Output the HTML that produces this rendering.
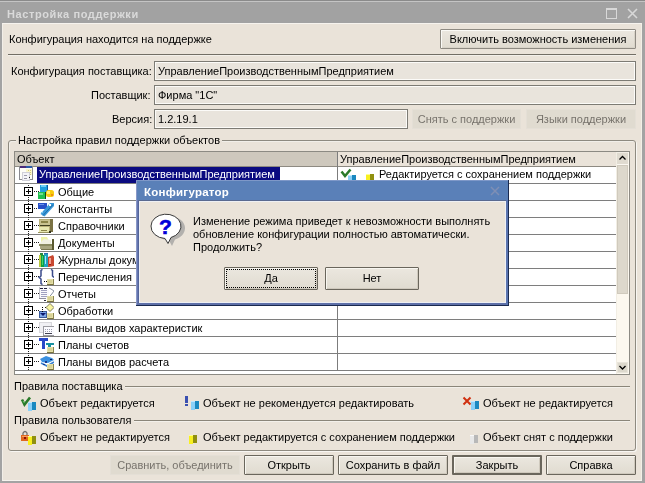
<!DOCTYPE html>
<html><head><meta charset="utf-8">
<style>
*{box-sizing:border-box}
html,body{margin:0;padding:0;width:645px;height:483px;overflow:hidden;background:#a4a4a4}
.a{position:absolute}
.t{position:absolute;font-family:"Liberation Sans",sans-serif;font-size:11px;line-height:13px;white-space:nowrap;color:#000;transform:translateZ(0)}
#win{position:absolute;left:0;top:0;width:645px;height:483px;background:#a3a3a3}
#title{position:absolute;left:0;top:0;width:645px;height:23px;background:#a2a2a2;border-top:1px solid #8a8a8a}
#content{position:absolute;left:2px;top:23px;width:640px;height:458px;background:#eae3d9;border-left:1px solid #f2eee8;border-top:1px solid #f6f3ee;border-bottom:1px solid #f6f3ee;border-right:1px solid #f2efe6}
.inp{position:absolute;border:1px solid #7d7b74;background:#e9e4dc;box-shadow:inset 0 0 0 1px #fcfbf8}
.btn{position:absolute;border:1px solid #6a665c;border-radius:1px;background:linear-gradient(#ebe7df,#e0dbd0);box-shadow:inset 1px 1px 0 #f8f6f0,inset -1px -1px 0 #cfc9bd}
.dbtn{position:absolute;background:#e0dbd0;border:1px solid #e4dfd6}
.bt{position:absolute;left:0;right:0;text-align:center;font-family:"Liberation Sans",sans-serif;font-size:11px;line-height:13px;white-space:nowrap;transform:translateZ(0)}
.sepd{position:absolute;height:1px;background:#8a8579}
.sepl{position:absolute;height:1px;background:#f3f0ea}
.row{position:absolute;left:15px;width:600px;height:1px;background:#8f8f8f}
</style></head><body>
<div id="win">
 <div id="title"></div>
 <div class="a" style="left:0;top:1px;width:645px;height:1px;background:#c4c4c4"></div>
 <div class="t" style="left:7px;top:8px;font-weight:bold;font-size:11px;color:#dadada;letter-spacing:0.6px">Настройка поддержки</div>
 <!-- max button -->
 <div class="a" style="left:606px;top:8px;width:11px;height:11px;border:1px solid #d8d8d8;border-top-width:2px"></div>
 <svg class="a" style="left:627px;top:8px" width="11" height="11"><path d="M1 1 L10 10 M10 1 L1 10" stroke="#d8d8d8" stroke-width="1.6"/></svg>
 <div id="content"></div>

 <div class="t" style="left:9px;top:33px">Конфигурация находится на поддержке</div>
 <div class="btn" style="left:440px;top:29px;width:196px;height:20px;border-color:#8e8a82;box-shadow:inset 1px 1px 0 #fbfaf6,inset -1px -1px 0 #d8d3c8"><div class="bt" style="top:3px">Включить возможность изменения</div></div>
 <div class="sepd" style="left:8px;top:54px;width:628px;background:#726e65"></div>
 <div class="sepl" style="left:8px;top:55px;width:628px"></div>

 <div class="t" style="left:11px;top:65px">Конфигурация поставщика:</div>
 <div class="inp" style="left:154px;top:61px;width:482px;height:20px"></div>
 <div class="t" style="left:158px;top:65px">УправлениеПроизводственнымПредприятием</div>
 <div class="t" style="left:91px;top:89px">Поставщик:</div>
 <div class="inp" style="left:154px;top:85px;width:482px;height:20px"></div>
 <div class="t" style="left:158px;top:89px">Фирма "1С"</div>
 <div class="t" style="left:112px;top:113px">Версия:</div>
 <div class="inp" style="left:154px;top:109px;width:254px;height:20px"></div>
 <div class="t" style="left:158px;top:113px">1.2.19.1</div>
 <div class="dbtn" style="left:412px;top:109px;width:109px;height:20px"><div class="bt" style="top:3px;color:#77736c">Снять с поддержки</div></div>
 <div class="dbtn" style="left:526px;top:109px;width:110px;height:20px"><div class="bt" style="top:3px;color:#77736c">Языки поддержки</div></div>

 <!-- group box -->
 <div class="a" style="left:8px;top:140px;width:628px;height:311px;border:1px solid #8e8a80;border-radius:3px;box-shadow:1px 1px 0 #f8f6f2, inset 1px 1px 0 #f2efe9"></div>
 <div class="a" style="left:16px;top:134px;width:206px;height:13px;background:#eae3d9"></div>
 <div class="t" style="left:18px;top:134px">Настройка правил поддержки объектов</div>

 <!-- grid -->
 <div class="a" style="left:14px;top:151px;width:616px;height:224px;border:1px solid #8c8a83;background:#fff"></div>
 <div class="a" style="left:15px;top:152px;width:322px;height:14px;background:#cec8bd"></div>
 <div class="a" style="left:338px;top:152px;width:278px;height:14px;background:#eae3d9"></div>
 <div class="a" style="left:15px;top:166px;width:601px;height:1px;background:#8e8a82"></div>
 <div class="a" style="left:337px;top:152px;width:1px;height:219px;background:#7c7c7c"></div>
 <div class="t" style="left:17px;top:153px">Объект</div>
 <div class="t" style="left:340px;top:153px">УправлениеПроизводственнымПредприятием</div>
 <div class="a" style="left:15px;top:183px;width:601px;height:1px;background:#7e7e7e"></div>
<div class="a" style="left:15px;top:200px;width:601px;height:1px;background:#7e7e7e"></div>
<div class="a" style="left:15px;top:217px;width:601px;height:1px;background:#7e7e7e"></div>
<div class="a" style="left:15px;top:234px;width:601px;height:1px;background:#7e7e7e"></div>
<div class="a" style="left:15px;top:251px;width:601px;height:1px;background:#7e7e7e"></div>
<div class="a" style="left:15px;top:268px;width:601px;height:1px;background:#7e7e7e"></div>
<div class="a" style="left:15px;top:285px;width:601px;height:1px;background:#7e7e7e"></div>
<div class="a" style="left:15px;top:302px;width:601px;height:1px;background:#7e7e7e"></div>
<div class="a" style="left:15px;top:319px;width:601px;height:1px;background:#7e7e7e"></div>
<div class="a" style="left:15px;top:336px;width:601px;height:1px;background:#7e7e7e"></div>
<div class="a" style="left:15px;top:353px;width:601px;height:1px;background:#7e7e7e"></div>
<div class="a" style="left:15px;top:370px;width:601px;height:1px;background:#7e7e7e"></div>
<div class="a" style="left:37px;top:167px;width:243px;height:16px;background:#0a0a80"></div>
<div class="t" style="left:39px;top:168px;color:#fff">УправлениеПроизводственнымПредприятием</div>
<svg class="a" style="left:18px;top:165px" width="16" height="17" viewBox="0 0 16 17" shape-rendering="crispEdges"><rect x="1" y="1" width="14" height="14" fill="#8a8a90"/><rect x="2" y="3" width="12" height="11" fill="#fdfdf8"/><rect x="2" y="1" width="6" height="2" fill="#4a2a7a"/><rect x="8" y="1" width="6" height="2" fill="#2a5aa8"/><rect x="10" y="5" width="1" height="1" fill="#b0a050"/><rect x="12" y="5" width="1" height="1" fill="#b0a050"/><rect x="12" y="7" width="1" height="1" fill="#b0a050"/><rect x="10" y="7" width="1" height="1" fill="#c0b060"/><rect x="12" y="9" width="1" height="1" fill="#a09050"/><rect x="8" y="4" width="6" height="6" fill="#f8f0a0" opacity="0.5"/><rect x="4" y="7" width="8" height="9" fill="#d0d0d8"/><rect x="5" y="8" width="6" height="7" fill="#f4f4f8"/><rect x="6" y="10" width="3" height="1" fill="#9898a8"/><rect x="6" y="13" width="3" height="1" fill="#9898a8"/><rect x="11" y="12" width="1" height="1" fill="#202020"/><rect x="1" y="14" width="3" height="1" fill="#8a8a90"/></svg>
<svg class="a" style="left:340px;top:168px" width="24" height="12" viewBox="0 0 24 12" shape-rendering="crispEdges"><path d="M1.5 3.5 L5 8 L10.5 1.5" fill="none" stroke="#2a7a2a" stroke-width="2.5" shape-rendering="auto"/><rect x="8" y="8" width="4" height="8" fill="#8ad0f8"/><rect x="12" y="7" width="4" height="8" fill="#1a88c0"/><rect x="8" y="7" width="4" height="1" fill="#c0e8ff"/></svg>
<svg class="a" style="left:365px;top:172px" width="10" height="8" viewBox="0 0 10 8" shape-rendering="crispEdges"><rect x="1" y="3" width="4" height="8" fill="#f8f020"/><rect x="5" y="2" width="4" height="8" fill="#909010"/><rect x="1" y="2" width="4" height="1" fill="#ffff90"/></svg>
<div class="t" style="left:379px;top:168px">Редактируется с сохранением поддержки</div>
<svg class="a" style="left:28px;top:185px" width="1" height="186" viewBox="0 0 1 186" shape-rendering="crispEdges"><rect x="0" y="0" width="1" height="1" fill="#202020"/><rect x="0" y="2" width="1" height="1" fill="#202020"/><rect x="0" y="4" width="1" height="1" fill="#202020"/><rect x="0" y="6" width="1" height="1" fill="#202020"/><rect x="0" y="8" width="1" height="1" fill="#202020"/><rect x="0" y="10" width="1" height="1" fill="#202020"/><rect x="0" y="12" width="1" height="1" fill="#202020"/><rect x="0" y="14" width="1" height="1" fill="#202020"/><rect x="0" y="16" width="1" height="1" fill="#202020"/><rect x="0" y="18" width="1" height="1" fill="#202020"/><rect x="0" y="20" width="1" height="1" fill="#202020"/><rect x="0" y="22" width="1" height="1" fill="#202020"/><rect x="0" y="24" width="1" height="1" fill="#202020"/><rect x="0" y="26" width="1" height="1" fill="#202020"/><rect x="0" y="28" width="1" height="1" fill="#202020"/><rect x="0" y="30" width="1" height="1" fill="#202020"/><rect x="0" y="32" width="1" height="1" fill="#202020"/><rect x="0" y="34" width="1" height="1" fill="#202020"/><rect x="0" y="36" width="1" height="1" fill="#202020"/><rect x="0" y="38" width="1" height="1" fill="#202020"/><rect x="0" y="40" width="1" height="1" fill="#202020"/><rect x="0" y="42" width="1" height="1" fill="#202020"/><rect x="0" y="44" width="1" height="1" fill="#202020"/><rect x="0" y="46" width="1" height="1" fill="#202020"/><rect x="0" y="48" width="1" height="1" fill="#202020"/><rect x="0" y="50" width="1" height="1" fill="#202020"/><rect x="0" y="52" width="1" height="1" fill="#202020"/><rect x="0" y="54" width="1" height="1" fill="#202020"/><rect x="0" y="56" width="1" height="1" fill="#202020"/><rect x="0" y="58" width="1" height="1" fill="#202020"/><rect x="0" y="60" width="1" height="1" fill="#202020"/><rect x="0" y="62" width="1" height="1" fill="#202020"/><rect x="0" y="64" width="1" height="1" fill="#202020"/><rect x="0" y="66" width="1" height="1" fill="#202020"/><rect x="0" y="68" width="1" height="1" fill="#202020"/><rect x="0" y="70" width="1" height="1" fill="#202020"/><rect x="0" y="72" width="1" height="1" fill="#202020"/><rect x="0" y="74" width="1" height="1" fill="#202020"/><rect x="0" y="76" width="1" height="1" fill="#202020"/><rect x="0" y="78" width="1" height="1" fill="#202020"/><rect x="0" y="80" width="1" height="1" fill="#202020"/><rect x="0" y="82" width="1" height="1" fill="#202020"/><rect x="0" y="84" width="1" height="1" fill="#202020"/><rect x="0" y="86" width="1" height="1" fill="#202020"/><rect x="0" y="88" width="1" height="1" fill="#202020"/><rect x="0" y="90" width="1" height="1" fill="#202020"/><rect x="0" y="92" width="1" height="1" fill="#202020"/><rect x="0" y="94" width="1" height="1" fill="#202020"/><rect x="0" y="96" width="1" height="1" fill="#202020"/><rect x="0" y="98" width="1" height="1" fill="#202020"/><rect x="0" y="100" width="1" height="1" fill="#202020"/><rect x="0" y="102" width="1" height="1" fill="#202020"/><rect x="0" y="104" width="1" height="1" fill="#202020"/><rect x="0" y="106" width="1" height="1" fill="#202020"/><rect x="0" y="108" width="1" height="1" fill="#202020"/><rect x="0" y="110" width="1" height="1" fill="#202020"/><rect x="0" y="112" width="1" height="1" fill="#202020"/><rect x="0" y="114" width="1" height="1" fill="#202020"/><rect x="0" y="116" width="1" height="1" fill="#202020"/><rect x="0" y="118" width="1" height="1" fill="#202020"/><rect x="0" y="120" width="1" height="1" fill="#202020"/><rect x="0" y="122" width="1" height="1" fill="#202020"/><rect x="0" y="124" width="1" height="1" fill="#202020"/><rect x="0" y="126" width="1" height="1" fill="#202020"/><rect x="0" y="128" width="1" height="1" fill="#202020"/><rect x="0" y="130" width="1" height="1" fill="#202020"/><rect x="0" y="132" width="1" height="1" fill="#202020"/><rect x="0" y="134" width="1" height="1" fill="#202020"/><rect x="0" y="136" width="1" height="1" fill="#202020"/><rect x="0" y="138" width="1" height="1" fill="#202020"/><rect x="0" y="140" width="1" height="1" fill="#202020"/><rect x="0" y="142" width="1" height="1" fill="#202020"/><rect x="0" y="144" width="1" height="1" fill="#202020"/><rect x="0" y="146" width="1" height="1" fill="#202020"/><rect x="0" y="148" width="1" height="1" fill="#202020"/><rect x="0" y="150" width="1" height="1" fill="#202020"/><rect x="0" y="152" width="1" height="1" fill="#202020"/><rect x="0" y="154" width="1" height="1" fill="#202020"/><rect x="0" y="156" width="1" height="1" fill="#202020"/><rect x="0" y="158" width="1" height="1" fill="#202020"/><rect x="0" y="160" width="1" height="1" fill="#202020"/><rect x="0" y="162" width="1" height="1" fill="#202020"/><rect x="0" y="164" width="1" height="1" fill="#202020"/><rect x="0" y="166" width="1" height="1" fill="#202020"/><rect x="0" y="168" width="1" height="1" fill="#202020"/><rect x="0" y="170" width="1" height="1" fill="#202020"/><rect x="0" y="172" width="1" height="1" fill="#202020"/><rect x="0" y="174" width="1" height="1" fill="#202020"/><rect x="0" y="176" width="1" height="1" fill="#202020"/><rect x="0" y="178" width="1" height="1" fill="#202020"/><rect x="0" y="180" width="1" height="1" fill="#202020"/><rect x="0" y="182" width="1" height="1" fill="#202020"/><rect x="0" y="184" width="1" height="1" fill="#202020"/></svg>
<div class="a" style="left:24px;top:187px;width:9px;height:9px;border:1px solid #000;background:#fff"></div>
<div class="a" style="left:26px;top:191px;width:5px;height:1px;background:#000"></div>
<div class="a" style="left:28px;top:189px;width:1px;height:5px;background:#000"></div>
<svg class="a" style="left:34px;top:191px" width="5" height="1" viewBox="0 0 5 1" shape-rendering="crispEdges"><rect x="0" y="0" width="1" height="1" fill="#202020"/><rect x="2" y="0" width="1" height="1" fill="#202020"/><rect x="4" y="0" width="1" height="1" fill="#202020"/></svg>
<svg class="a" style="left:38px;top:184px" width="16" height="16" viewBox="0 0 16 16" shape-rendering="crispEdges"><rect x="2" y="1" width="8" height="7" fill="#20a0e0"/><rect x="3" y="1" width="5" height="2" fill="#70d0f8"/><rect x="9" y="1" width="1" height="7" fill="#0a5aa0"/><rect x="0" y="8" width="8" height="7" fill="#20c050"/><rect x="1" y="9" width="4" height="2" fill="#70e090"/><rect x="7" y="8" width="1" height="7" fill="#0a4a18"/><rect x="8" y="6" width="8" height="7" rx="2.5" fill="#f8cc10" shape-rendering="auto"/><rect x="9" y="7" width="3" height="3" fill="#fff070"/><rect x="13" y="10" width="2" height="2" fill="#f09010"/></svg>
<div class="t" style="left:58px;top:186px">Общие</div>
<div class="a" style="left:24px;top:204px;width:9px;height:9px;border:1px solid #000;background:#fff"></div>
<div class="a" style="left:26px;top:208px;width:5px;height:1px;background:#000"></div>
<div class="a" style="left:28px;top:206px;width:1px;height:5px;background:#000"></div>
<svg class="a" style="left:34px;top:208px" width="5" height="1" viewBox="0 0 5 1" shape-rendering="crispEdges"><rect x="0" y="0" width="1" height="1" fill="#202020"/><rect x="2" y="0" width="1" height="1" fill="#202020"/><rect x="4" y="0" width="1" height="1" fill="#202020"/></svg>
<svg class="a" style="left:38px;top:201px" width="16" height="16" viewBox="0 0 16 16" shape-rendering="crispEdges"><rect x="0" y="2" width="9" height="6" fill="#2850c8"/><rect x="1" y="3" width="5" height="1" fill="#6a90e8"/><path d="M2.5 13 L12 2 L16 2 L16 5 L6.5 15.5 Z" fill="#3a98d8" shape-rendering="auto"/><path d="M5 14.5 L15 3.5" stroke="#1a6aa8" stroke-width="1" shape-rendering="auto"/><rect x="11" y="3" width="2" height="2" fill="#ffffff"/><rect x="3" y="11" width="2" height="1" fill="#80c8f0"/></svg>
<div class="t" style="left:58px;top:203px">Константы</div>
<div class="a" style="left:24px;top:221px;width:9px;height:9px;border:1px solid #000;background:#fff"></div>
<div class="a" style="left:26px;top:225px;width:5px;height:1px;background:#000"></div>
<div class="a" style="left:28px;top:223px;width:1px;height:5px;background:#000"></div>
<svg class="a" style="left:34px;top:225px" width="5" height="1" viewBox="0 0 5 1" shape-rendering="crispEdges"><rect x="0" y="0" width="1" height="1" fill="#202020"/><rect x="2" y="0" width="1" height="1" fill="#202020"/><rect x="4" y="0" width="1" height="1" fill="#202020"/></svg>
<svg class="a" style="left:38px;top:218px" width="16" height="16" viewBox="0 0 16 16" shape-rendering="crispEdges"><rect x="1" y="1" width="12" height="14" fill="#b8b078"/><rect x="12" y="1" width="3" height="13" fill="#7a7244"/><rect x="2" y="2" width="10" height="5" fill="#c8c290"/><rect x="3" y="3" width="7" height="2" fill="#8a8448"/><rect x="2" y="7" width="10" height="1" fill="#404020"/><rect x="1" y="9" width="10" height="5" fill="#e8e8b0"/><rect x="3" y="12" width="6" height="1" fill="#8a8448"/><rect x="0" y="14" width="12" height="1" fill="#9a9460"/><rect x="11" y="13" width="2" height="2" fill="#303018"/></svg>
<div class="t" style="left:58px;top:220px">Справочники</div>
<div class="a" style="left:24px;top:238px;width:9px;height:9px;border:1px solid #000;background:#fff"></div>
<div class="a" style="left:26px;top:242px;width:5px;height:1px;background:#000"></div>
<div class="a" style="left:28px;top:240px;width:1px;height:5px;background:#000"></div>
<svg class="a" style="left:34px;top:242px" width="5" height="1" viewBox="0 0 5 1" shape-rendering="crispEdges"><rect x="0" y="0" width="1" height="1" fill="#202020"/><rect x="2" y="0" width="1" height="1" fill="#202020"/><rect x="4" y="0" width="1" height="1" fill="#202020"/></svg>
<svg class="a" style="left:38px;top:235px" width="16" height="16" viewBox="0 0 16 16" shape-rendering="crispEdges"><path d="M3 2 L9 2 L11 6 L3 8 Z" fill="#eef2a8" shape-rendering="auto"/><path d="M1 9 L6 4 L13 5 L13 9 Z" fill="#f0f0e0" shape-rendering="auto"/><rect x="1" y="9" width="14" height="2" fill="#8a8a60"/><rect x="2" y="11" width="12" height="3" fill="#a8a680"/><rect x="3" y="14" width="11" height="1" fill="#7a7850"/><rect x="14" y="4" width="2" height="11" fill="#5a5a30"/></svg>
<div class="t" style="left:58px;top:237px">Документы</div>
<div class="a" style="left:24px;top:255px;width:9px;height:9px;border:1px solid #000;background:#fff"></div>
<div class="a" style="left:26px;top:259px;width:5px;height:1px;background:#000"></div>
<div class="a" style="left:28px;top:257px;width:1px;height:5px;background:#000"></div>
<svg class="a" style="left:34px;top:259px" width="5" height="1" viewBox="0 0 5 1" shape-rendering="crispEdges"><rect x="0" y="0" width="1" height="1" fill="#202020"/><rect x="2" y="0" width="1" height="1" fill="#202020"/><rect x="4" y="0" width="1" height="1" fill="#202020"/></svg>
<svg class="a" style="left:38px;top:252px" width="16" height="16" viewBox="0 0 16 16" shape-rendering="crispEdges"><rect x="1" y="3" width="2" height="12" fill="#b8c840"/><rect x="3" y="3" width="3" height="12" fill="#10a040"/><rect x="4" y="4" width="1" height="9" fill="#40d070"/><rect x="6" y="2" width="4" height="13" fill="#20a0c0"/><rect x="7" y="4" width="1" height="8" fill="#a0f0f8"/><rect x="2" y="1" width="3" height="2" fill="#2a8a40" shape-rendering="auto"/><rect x="6" y="1" width="4" height="1" fill="#2a6ab0"/><path d="M10 5 L15 3 L16 5 L16 14 L11 15 L10 15 Z" fill="#c84830" shape-rendering="auto"/><rect x="11" y="6" width="2" height="6" fill="#f0a090"/><rect x="11" y="12" width="2" height="1" fill="#a01810"/></svg>
<div class="t" style="left:58px;top:254px">Журналы документов</div>
<div class="a" style="left:24px;top:272px;width:9px;height:9px;border:1px solid #000;background:#fff"></div>
<div class="a" style="left:26px;top:276px;width:5px;height:1px;background:#000"></div>
<div class="a" style="left:28px;top:274px;width:1px;height:5px;background:#000"></div>
<svg class="a" style="left:34px;top:276px" width="5" height="1" viewBox="0 0 5 1" shape-rendering="crispEdges"><rect x="0" y="0" width="1" height="1" fill="#202020"/><rect x="2" y="0" width="1" height="1" fill="#202020"/><rect x="4" y="0" width="1" height="1" fill="#202020"/></svg>
<svg class="a" style="left:38px;top:269px" width="16" height="16" viewBox="0 0 16 16" shape-rendering="crispEdges"><path d="M4.5 0.5 L3 1.5 L3 7 L1.2 8.5 L3 10 L3 14.5 L4.5 15.5" fill="none" stroke="#3a4a8a" stroke-width="1.5" shape-rendering="auto"/><path d="M13 0.5 L14.5 1.5 L14.5 7 L16 8.5" fill="none" stroke="#3a4a8a" stroke-width="1.5" shape-rendering="auto"/><rect x="6" y="12" width="1" height="1" fill="#000"/><rect x="8" y="12" width="1" height="1" fill="#000"/><rect x="9" y="10" width="7" height="6" fill="#bdb57a"/><rect x="9" y="10" width="6" height="5" fill="#e4dfa8"/><rect x="10" y="11" width="4" height="3" fill="#d8d296"/><rect x="9" y="15" width="7" height="1" fill="#7a7440"/><rect x="15" y="10" width="1" height="6" fill="#8a8450"/></svg>
<div class="t" style="left:58px;top:271px">Перечисления</div>
<div class="a" style="left:24px;top:289px;width:9px;height:9px;border:1px solid #000;background:#fff"></div>
<div class="a" style="left:26px;top:293px;width:5px;height:1px;background:#000"></div>
<div class="a" style="left:28px;top:291px;width:1px;height:5px;background:#000"></div>
<svg class="a" style="left:34px;top:293px" width="5" height="1" viewBox="0 0 5 1" shape-rendering="crispEdges"><rect x="0" y="0" width="1" height="1" fill="#202020"/><rect x="2" y="0" width="1" height="1" fill="#202020"/><rect x="4" y="0" width="1" height="1" fill="#202020"/></svg>
<svg class="a" style="left:38px;top:286px" width="16" height="16" viewBox="0 0 16 16" shape-rendering="crispEdges"><rect x="2" y="1" width="9" height="13" fill="#fafafc"/><rect x="1" y="1" width="1" height="12" fill="#c0c0c8"/><rect x="2" y="2" width="3" height="1" fill="#202040"/><rect x="6" y="2" width="3" height="1" fill="#202040"/><rect x="3" y="4" width="6" height="1" fill="#a0a0c0"/><rect x="3" y="6" width="6" height="1" fill="#a0a0c0"/><rect x="3" y="8" width="6" height="1" fill="#a0a0c0"/><rect x="3" y="10" width="6" height="1" fill="#a0a0c0"/><rect x="1" y="12" width="7" height="1" fill="#9090a0"/><rect x="6" y="14" width="2" height="1" fill="#303040"/><path d="M11 2 L13 3 L16 5 L13 9 L11 11" fill="none" stroke="#8890a0" stroke-width="1" shape-rendering="auto"/><rect x="9" y="10" width="7" height="6" fill="#bdb57a"/><rect x="9" y="10" width="6" height="5" fill="#e4dfa8"/><rect x="10" y="11" width="4" height="3" fill="#d8d296"/><rect x="9" y="15" width="7" height="1" fill="#7a7440"/><rect x="15" y="10" width="1" height="6" fill="#8a8450"/></svg>
<div class="t" style="left:58px;top:288px">Отчеты</div>
<div class="a" style="left:24px;top:306px;width:9px;height:9px;border:1px solid #000;background:#fff"></div>
<div class="a" style="left:26px;top:310px;width:5px;height:1px;background:#000"></div>
<div class="a" style="left:28px;top:308px;width:1px;height:5px;background:#000"></div>
<svg class="a" style="left:34px;top:310px" width="5" height="1" viewBox="0 0 5 1" shape-rendering="crispEdges"><rect x="0" y="0" width="1" height="1" fill="#202020"/><rect x="2" y="0" width="1" height="1" fill="#202020"/><rect x="4" y="0" width="1" height="1" fill="#202020"/></svg>
<svg class="a" style="left:38px;top:303px" width="16" height="16" viewBox="0 0 16 16" shape-rendering="crispEdges"><rect x="1" y="8" width="8" height="7" fill="#3a5a98"/><rect x="2" y="9" width="6" height="5" fill="#80a8e8"/><path d="M2 10 L8 10 L5 13 Z" fill="#0a1a70" shape-rendering="auto"/><rect x="4" y="4" width="1" height="1" fill="#000"/><rect x="4" y="6" width="1" height="1" fill="#000"/><rect x="4" y="8" width="1" height="1" fill="#000"/><rect x="7" y="4" width="1" height="1" fill="#000"/><rect x="11" y="4" width="1" height="1" fill="#000"/><path d="M12 0.5 L16 4.5 L12 8.5 L8 4.5 Z" fill="#f8f4a0" stroke="#606040" stroke-width="0.8" shape-rendering="auto"/><rect x="9" y="10" width="7" height="6" fill="#bdb57a"/><rect x="9" y="10" width="6" height="5" fill="#e4dfa8"/><rect x="10" y="11" width="4" height="3" fill="#d8d296"/><rect x="9" y="15" width="7" height="1" fill="#7a7440"/><rect x="15" y="10" width="1" height="6" fill="#8a8450"/></svg>
<div class="t" style="left:58px;top:305px">Обработки</div>
<div class="a" style="left:24px;top:323px;width:9px;height:9px;border:1px solid #000;background:#fff"></div>
<div class="a" style="left:26px;top:327px;width:5px;height:1px;background:#000"></div>
<div class="a" style="left:28px;top:325px;width:1px;height:5px;background:#000"></div>
<svg class="a" style="left:34px;top:327px" width="5" height="1" viewBox="0 0 5 1" shape-rendering="crispEdges"><rect x="0" y="0" width="1" height="1" fill="#202020"/><rect x="2" y="0" width="1" height="1" fill="#202020"/><rect x="4" y="0" width="1" height="1" fill="#202020"/></svg>
<svg class="a" style="left:38px;top:320px" width="16" height="16" viewBox="0 0 16 16" shape-rendering="crispEdges"><rect x="1" y="2" width="13" height="11" fill="#d8d8dc"/><rect x="2" y="3" width="11" height="9" fill="#f0f0f4"/><rect x="5" y="6" width="12" height="10" fill="#9a9aa0"/><rect x="6" y="7" width="10" height="8" fill="#fbfbff"/><rect x="7" y="9" width="1" height="1" fill="#a0a0b0"/><rect x="9" y="9" width="1" height="1" fill="#a0a0b0"/><rect x="11" y="9" width="1" height="1" fill="#a0a0b0"/><rect x="13" y="9" width="1" height="1" fill="#a0a0b0"/><rect x="7" y="11" width="1" height="1" fill="#a0a0b0"/><rect x="9" y="11" width="1" height="1" fill="#a0a0b0"/><rect x="11" y="11" width="1" height="1" fill="#a0a0b0"/><rect x="13" y="11" width="1" height="1" fill="#a0a0b0"/><rect x="7" y="13" width="7" height="1" fill="#404050"/></svg>
<div class="t" style="left:58px;top:322px">Планы видов характеристик</div>
<div class="a" style="left:24px;top:340px;width:9px;height:9px;border:1px solid #000;background:#fff"></div>
<div class="a" style="left:26px;top:344px;width:5px;height:1px;background:#000"></div>
<div class="a" style="left:28px;top:342px;width:1px;height:5px;background:#000"></div>
<svg class="a" style="left:34px;top:344px" width="5" height="1" viewBox="0 0 5 1" shape-rendering="crispEdges"><rect x="0" y="0" width="1" height="1" fill="#202020"/><rect x="2" y="0" width="1" height="1" fill="#202020"/><rect x="4" y="0" width="1" height="1" fill="#202020"/></svg>
<svg class="a" style="left:38px;top:337px" width="16" height="16" viewBox="0 0 16 16" shape-rendering="crispEdges"><rect x="1" y="1" width="9" height="3" fill="#2a48c8"/><rect x="4" y="4" width="3" height="8" fill="#2a48c8"/><rect x="8" y="6" width="8" height="2" fill="#1890a0"/><rect x="10" y="8" width="3" height="2" fill="#1890a0"/><rect x="9" y="10" width="7" height="6" fill="#bdb57a"/><rect x="9" y="10" width="6" height="5" fill="#e4dfa8"/><rect x="10" y="11" width="4" height="3" fill="#d8d296"/><rect x="9" y="15" width="7" height="1" fill="#7a7440"/><rect x="15" y="10" width="1" height="6" fill="#8a8450"/></svg>
<div class="t" style="left:58px;top:339px">Планы счетов</div>
<div class="a" style="left:24px;top:357px;width:9px;height:9px;border:1px solid #000;background:#fff"></div>
<div class="a" style="left:26px;top:361px;width:5px;height:1px;background:#000"></div>
<div class="a" style="left:28px;top:359px;width:1px;height:5px;background:#000"></div>
<svg class="a" style="left:34px;top:361px" width="5" height="1" viewBox="0 0 5 1" shape-rendering="crispEdges"><rect x="0" y="0" width="1" height="1" fill="#202020"/><rect x="2" y="0" width="1" height="1" fill="#202020"/><rect x="4" y="0" width="1" height="1" fill="#202020"/></svg>
<svg class="a" style="left:38px;top:354px" width="16" height="16" viewBox="0 0 16 16" shape-rendering="crispEdges"><path d="M2 5 L8 2 L14 4 L16 6 L10 9 L4 8 Z" fill="#3a90e0" shape-rendering="auto"/><path d="M3 9 L9 12 L16 8" fill="none" stroke="#3a80d0" stroke-width="1.6" shape-rendering="auto"/><rect x="7" y="7" width="2" height="2" fill="#1a3a90"/><rect x="12" y="5" width="2" height="1" fill="#0a2060"/><rect x="16" y="8" width="1" height="1" fill="#0a2060"/><rect x="5" y="10" width="2" height="1" fill="#1a3a90"/><rect x="9" y="10" width="7" height="6" fill="#bdb57a"/><rect x="9" y="10" width="6" height="5" fill="#e4dfa8"/><rect x="10" y="11" width="4" height="3" fill="#d8d296"/><rect x="9" y="15" width="7" height="1" fill="#7a7440"/><rect x="15" y="10" width="1" height="6" fill="#8a8450"/></svg>
<div class="t" style="left:58px;top:356px">Планы видов расчета</div>
 <!-- scrollbar -->
 <div class="a" style="left:616px;top:152px;width:13px;height:222px;background:#fcf8ef;border-left:1px solid #f2eee4"></div>
 <div class="a" style="left:617px;top:165px;width:11px;height:129px;background:#ddd8cc;border:1px solid #d0cabd"></div>
 <div class="a" style="left:617px;top:152px;width:11px;height:13px;background:#e0dbd0;border-top:1px solid #f2eee6;border-bottom:1px solid #fbf8f2"></div>
 <svg class="a" style="left:617px;top:152px" width="11" height="13"><path d="M2.5 7.5 L5.5 4.5 L8.5 7.5" fill="none" stroke="#000" stroke-width="1.3"/></svg>
 <div class="a" style="left:617px;top:362px;width:11px;height:11px;background:#dcd8cc;border:1px solid #e8e4da"></div>
 <svg class="a" style="left:617px;top:362px" width="11" height="11"><path d="M2.5 4 L5.5 7 L8.5 4" fill="none" stroke="#000" stroke-width="1.3"/></svg>
 <!-- legends -->
 <div class="t" style="left:14px;top:380px">Правила поставщика</div>
 <div class="sepd" style="left:125px;top:386px;width:505px"></div>
 <div class="sepl" style="left:125px;top:387px;width:505px"></div>
 <div class="t" style="left:40px;top:397px">Объект редактируется</div>
 <div class="t" style="left:203px;top:397px">Объект не рекомендуется редактировать</div>
 <div class="t" style="left:483px;top:397px">Объект не редактируется</div>
 <div class="t" style="left:14px;top:414px">Правила пользователя</div>
 <div class="sepd" style="left:134px;top:420px;width:496px"></div>
 <div class="sepl" style="left:134px;top:421px;width:496px"></div>
 <div class="t" style="left:40px;top:431px">Объект не редактируется</div>
 <div class="t" style="left:203px;top:431px">Объект редактируется с сохранением поддержки</div>
 <div class="t" style="left:483px;top:431px">Объект снят с поддержки</div>

 <svg class="a" style="left:20px;top:396px" width="18" height="16" viewBox="0 0 18 16" shape-rendering="crispEdges"><path d="M2 3.5 L4.5 8.5 L10 1.5" fill="none" stroke="#2a7a2a" stroke-width="2.6" shape-rendering="auto"/><path d="M3 5 L4.5 7" stroke="#80e080" stroke-width="0.8" shape-rendering="auto"/><rect x="8" y="7" width="4" height="8" fill="#8ad0f8"/><rect x="12" y="6" width="4" height="8" fill="#1a88c0"/><rect x="8" y="6" width="4" height="1" fill="#c0e8ff"/></svg>
<svg class="a" style="left:184px;top:395px" width="16" height="16" viewBox="0 0 16 16" shape-rendering="crispEdges"><rect x="1" y="1" width="3" height="7" fill="#3a50b0"/><rect x="1" y="9" width="3" height="2" fill="#3a50b0"/><rect x="7" y="7" width="4" height="8" fill="#8ad0f8"/><rect x="11" y="6" width="4" height="8" fill="#1a88c0"/><rect x="7" y="6" width="4" height="1" fill="#c0e8ff"/></svg>
<svg class="a" style="left:462px;top:396px" width="18" height="16" viewBox="0 0 18 16" shape-rendering="crispEdges"><path d="M1.5 1.5 L8.5 8.5 M8.5 1.5 L1.5 8.5" stroke="#d03010" stroke-width="2" shape-rendering="auto"/><rect x="9" y="6" width="4" height="8" fill="#8ad0f8"/><rect x="13" y="5" width="4" height="8" fill="#1a88c0"/><rect x="9" y="5" width="4" height="1" fill="#c0e8ff"/></svg>
<svg class="a" style="left:20px;top:430px" width="18" height="16" viewBox="0 0 18 16" shape-rendering="crispEdges"><path d="M3 5 L3 3 Q5 0 7 3 L7 5" fill="none" stroke="#707070" stroke-width="1.3" shape-rendering="auto"/><rect x="1" y="5" width="8" height="6" fill="#e06820"/><rect x="2" y="6" width="6" height="1" fill="#f8a060"/><rect x="4" y="7" width="2" height="2" fill="#901000"/><rect x="8" y="7" width="4" height="8" fill="#f8f020"/><rect x="12" y="6" width="4" height="8" fill="#909010"/><rect x="8" y="6" width="4" height="1" fill="#ffff90"/></svg>
<svg class="a" style="left:188px;top:434px" width="12" height="12" viewBox="0 0 12 12" shape-rendering="crispEdges"><rect x="1" y="2" width="4" height="8" fill="#f8f020"/><rect x="5" y="1" width="4" height="8" fill="#909010"/><rect x="1" y="1" width="4" height="1" fill="#ffff90"/></svg>
<svg class="a" style="left:469px;top:434px" width="12" height="12" viewBox="0 0 12 12" shape-rendering="crispEdges"><rect x="1" y="2" width="4" height="8" fill="#e8e8e8"/><rect x="5" y="1" width="4" height="8" fill="#b8b8b8"/><rect x="1" y="1" width="4" height="1" fill="#f8f8f8"/></svg>
 <!-- bottom buttons -->
 <div class="dbtn" style="left:110px;top:455px;width:130px;height:20px"><div class="bt" style="top:3px;color:#77736c">Сравнить, объединить</div></div>
 <div class="btn" style="left:244px;top:455px;width:90px;height:20px"><div class="bt" style="top:3px">Открыть</div></div>
 <div class="btn" style="left:338px;top:455px;width:110px;height:20px"><div class="bt" style="top:3px">Сохранить в файл</div></div>
 <div class="btn" style="left:452px;top:455px;width:90px;height:20px;border-width:2px"><div class="bt" style="top:2px">Закрыть</div></div>
 <div class="btn" style="left:546px;top:455px;width:90px;height:20px"><div class="bt" style="top:3px">Справка</div></div>

 <!-- dialog -->
 <div class="a" style="left:136px;top:180px;width:373px;height:126px;background:#5a80b8;border-right:1px solid #1a2a50;border-bottom:1px solid #1a2a50"></div>
 <div class="a" style="left:136px;top:180px;width:372px;height:1px;background:#7e98c8"></div>
 <div class="a" style="left:136px;top:180px;width:1px;height:125px;background:#8898c8"></div>
 <div class="a" style="left:137px;top:200px;width:1px;height:105px;background:#6676b0"></div>
 <div class="a" style="left:138px;top:200px;width:1px;height:105px;background:#54659a"></div>
 <div class="a" style="left:137px;top:303px;width:371px;height:2px;background:#5e70a8"></div>
 <div class="a" style="left:506px;top:200px;width:2px;height:105px;background:#5a74b0"></div>
 <div class="a" style="left:138px;top:200px;width:368px;height:1px;background:#5a6a90"></div>
 <div class="a" style="left:139px;top:201px;width:367px;height:102px;background:#eae3d9;border:1px solid #eef0f4"></div>
 <div class="t" style="left:144px;top:186px;font-weight:bold;font-size:11.5px;color:#fff;letter-spacing:0.25px">Конфигуратор</div>
 <svg class="a" style="left:490px;top:186px" width="10" height="10"><path d="M1 1 L9 9 M9 1 L1 9" stroke="#7f8fb5" stroke-width="1.5"/></svg>
 <svg class="a" style="left:146px;top:208px" width="40" height="40" viewBox="0 0 40 40">
  <path d="M7 18 A15 12 0 1 1 27 29.5 L24 36 L21 30.5 A15 12 0 0 1 7 18 Z" fill="#9a9a9a" opacity="0.7" transform="translate(2,2)"/>
  <path d="M5 18 A15 12 0 1 1 25 29.5 L22 35.5 L19 30.5 A15 12 0 0 1 5 18 Z" fill="#fff" stroke="#3a3a3a" stroke-width="1"/>
  <text x="19.5" y="25.5" text-anchor="middle" font-family="Liberation Sans" font-weight="bold" font-size="21" fill="#0000d8" stroke="#0000d8" stroke-width="0.6">?</text>
 </svg>
 <div class="t" style="left:193px;top:215px">Изменение режима приведет к невозможности выполнять</div>
 <div class="t" style="left:193px;top:228px">обновление конфигурации полностью автоматически.</div>
 <div class="t" style="left:193px;top:241px">Продолжить?</div>
 <div class="btn" style="left:224px;top:267px;width:94px;height:23px"><div class="bt" style="top:4px">Да</div><div class="a" style="left:1px;top:1px;right:1px;bottom:1px;border:1px dotted #000"></div></div>
 <div class="btn" style="left:325px;top:267px;width:94px;height:23px"><div class="bt" style="top:4px">Нет</div></div>
</div>
</body></html>
